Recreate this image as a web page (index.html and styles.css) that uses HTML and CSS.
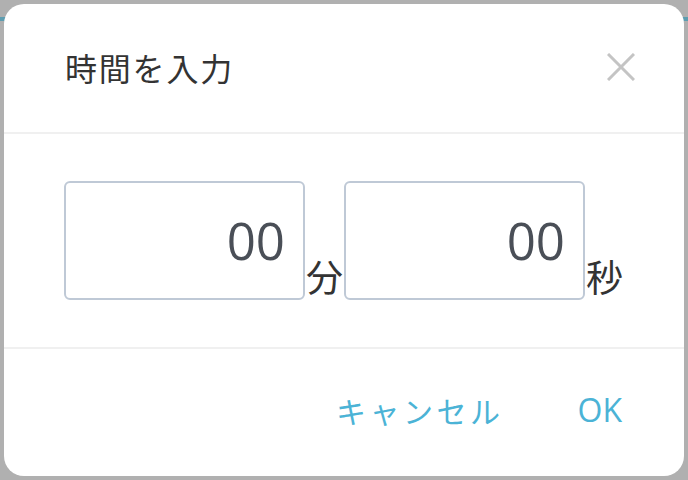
FILE: index.html
```html
<!DOCTYPE html>
<html lang="ja">
<head>
<meta charset="utf-8">
<link rel="stylesheet" href="styles.css">
</head>
<body>
<div class="appbar"></div>
<div class="dialog">
  <div class="dlg-header">
    <h1 class="dlg-title">時間を入力</h1>
    <button class="close-btn" aria-label="閉じる">
      <svg width="28" height="28" viewBox="0 0 28 28"><path d="M1 1 L27 27 M27 1 L1 27" stroke="#c4c4c4" stroke-width="3" fill="none"/></svg>
    </button>
  </div>
  <div class="dlg-body">
    <div class="field">
      <div class="time-box">00</div>
      <span class="unit">分</span>
    </div>
    <div class="field">
      <div class="time-box">00</div>
      <span class="unit">秒</span>
    </div>
  </div>
  <div class="dlg-footer">
    <button class="txt-btn">キャンセル</button>
    <button class="txt-btn ok">OK</button>
  </div>
</div>
</body>
</html>
```
FILE: styles.css
```css
html, body {
  margin: 0;
  padding: 0;
  width: 688px;
  height: 480px;
  overflow: hidden;
  background: #b0b0b0;
  font-family: "Noto Sans CJK JP", "Noto Sans", sans-serif;
}
.appbar {
  margin-top: 17px;
  height: 4px;
  background: #5e9db0;
}
.dialog {
  position: absolute;
  left: 4px;
  top: 4px;
  width: 680px;
  height: 472px;
  background: #fff;
  border-radius: 20px;
  display: flex;
  flex-direction: column;
}
.dlg-header {
  display: flex;
  align-items: center;
  justify-content: space-between;
  padding: 0 49px 0 61px;
  border-bottom: 2px solid #f0f0f0;
  box-sizing: border-box;
  height: 130px;
}
.dlg-title {
  margin: 0;
  font-size: 32px;
  font-weight: 400;
  letter-spacing: 1.8px;
  color: #333;
  line-height: 1;
  padding-bottom: 2px;
}
.close-btn {
  border: 0;
  background: none;
  padding: 0;
  width: 28px;
  height: 28px;
  display: flex;
  margin-bottom: 3px;
}
.dlg-body {
  height: 215px;
  border-bottom: 2px solid #f0f0f0;
  box-sizing: border-box;
  display: flex;
  align-items: flex-start;
  padding: 47px 0 0 60px;
}
.field {
  display: flex;
  align-items: flex-end;
}
.time-box {
  width: 241px;
  height: 119px;
  box-sizing: border-box;
  border: 2px solid #bfc9d6;
  border-radius: 6px;
  display: flex;
  align-items: center;
  justify-content: flex-end;
  padding: 0 18px 2px 0;
  font-family: "Open Sans", "Noto Sans", sans-serif;
  font-size: 51px;
  color: #4a4f57;
}
.unit {
  width: 39px;
  font-size: 37px;
  line-height: 1;
  color: #333;
  padding-bottom: 5px;
  display: flex;
  justify-content: center;
  white-space: nowrap;
}
.dlg-footer {
  flex: 1;
  display: flex;
  justify-content: flex-end;
  align-items: center;
  padding: 0 62px 6px 0;
  gap: 74px;
}
.txt-btn {
  border: 0;
  background: none;
  padding: 0;
  font-family: "Noto Sans CJK JP", "Noto Sans", sans-serif;
  font-size: 30px;
  color: #4bb3d6;
  letter-spacing: 3.5px;
  line-height: 1;
}
.txt-btn.ok {
  font-family: "Open Sans", "Noto Sans", sans-serif;
  font-size: 32px;
  letter-spacing: 0;
}
```
